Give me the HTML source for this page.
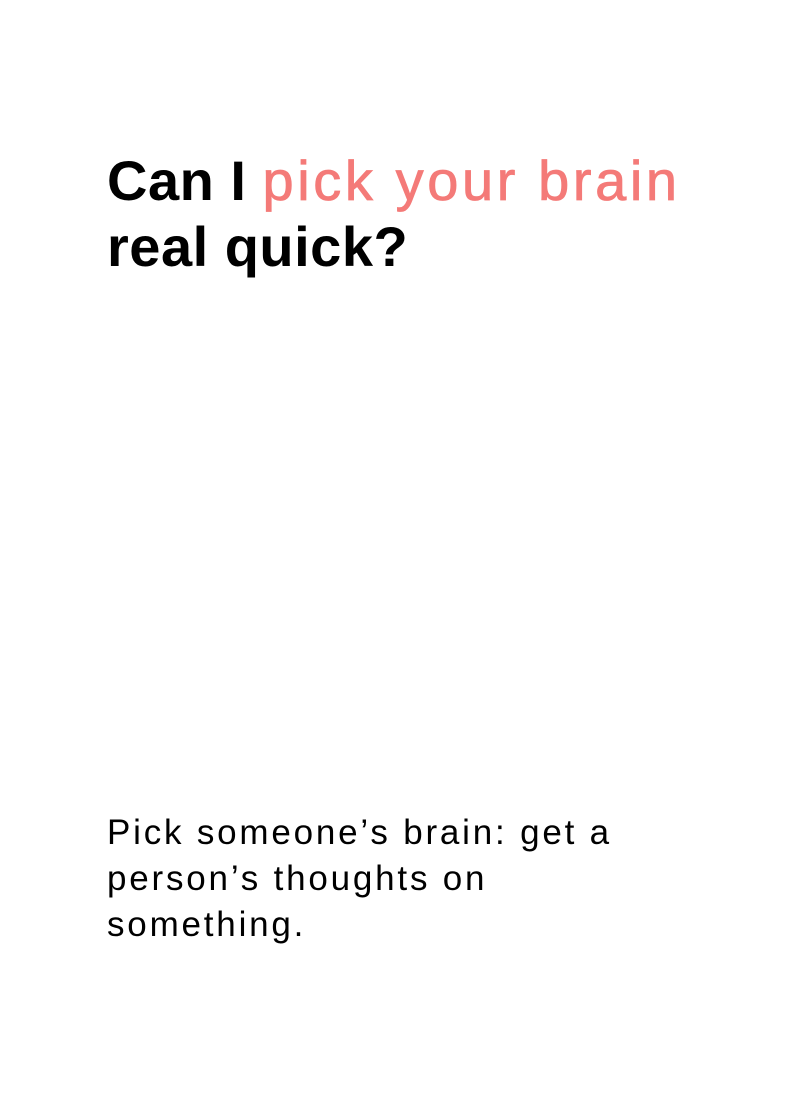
<!DOCTYPE html>
<html><head><meta charset="utf-8"><style>
html,body{margin:0;padding:0;background:#fff;width:795px;height:1095px;overflow:hidden}
h1{position:absolute;left:107px;top:148px;margin:0;font:bold 56px/66px "Liberation Sans",sans-serif;color:#000;letter-spacing:0.5px}
h1 span{color:#F47A78;font-weight:normal;letter-spacing:3.6px;-webkit-text-stroke:0.8px #F47A78}
p{position:absolute;left:107px;top:810px;margin:0;width:520px;font:35px/46px "Liberation Sans",sans-serif;color:#000;letter-spacing:2.8px}
</style></head><body>
<h1>Can I <span>pick your brain</span><br>real quick?</h1>
<p>Pick someone’s brain: get a person’s thoughts on something.</p>
</body></html>
